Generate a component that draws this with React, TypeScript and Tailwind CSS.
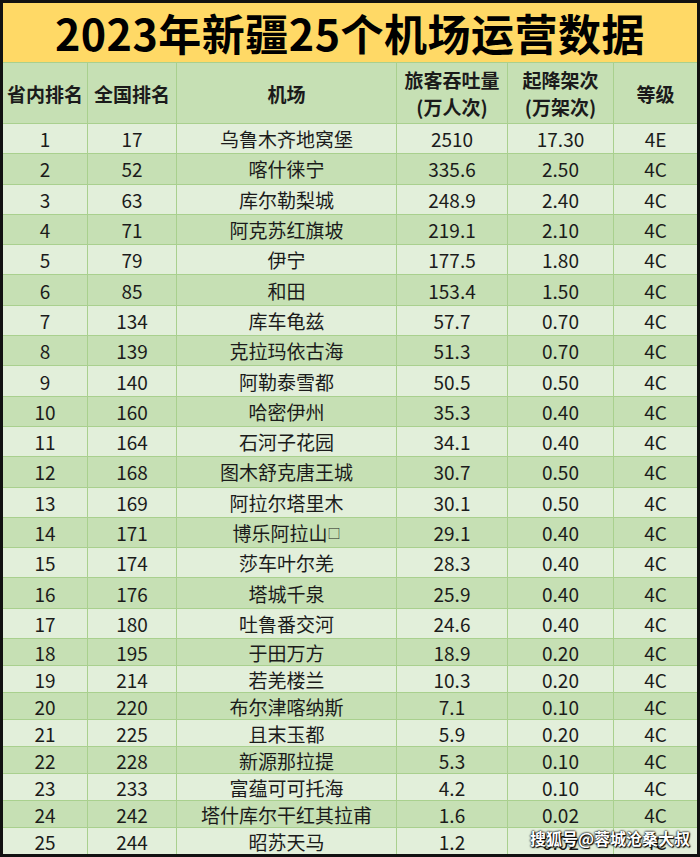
const rows: [string, string, string, string, string, string][] = [
  ['1', '17', '乌鲁木齐地窝堡', '2510', '17.30', '4E'],
  ['2', '52', '喀什徕宁', '335.6', '2.50', '4C'],
  ['3', '63', '库尔勒梨城', '248.9', '2.40', '4C'],
  ['4', '71', '阿克苏红旗坡', '219.1', '2.10', '4C'],
  ['5', '79', '伊宁', '177.5', '1.80', '4C'],
  ['6', '85', '和田', '153.4', '1.50', '4C'],
  ['7', '134', '库车龟兹', '57.7', '0.70', '4C'],
  ['8', '139', '克拉玛依古海', '51.3', '0.70', '4C'],
  ['9', '140', '阿勒泰雪都', '50.5', '0.50', '4C'],
  ['10', '160', '哈密伊州', '35.3', '0.40', '4C'],
  ['11', '164', '石河子花园', '34.1', '0.40', '4C'],
  ['12', '168', '图木舒克唐王城', '30.7', '0.50', '4C'],
  ['13', '169', '阿拉尔塔里木', '30.1', '0.50', '4C'],
  ['14', '171', '博乐阿拉山□', '29.1', '0.40', '4C'],
  ['15', '174', '莎车叶尔羌', '28.3', '0.40', '4C'],
  ['16', '176', '塔城千泉', '25.9', '0.40', '4C'],
  ['17', '180', '吐鲁番交河', '24.6', '0.40', '4C'],
  ['18', '195', '于田万方', '18.9', '0.20', '4C'],
  ['19', '214', '若羌楼兰', '10.3', '0.20', '4C'],
  ['20', '220', '布尔津喀纳斯', '7.1', '0.10', '4C'],
  ['21', '225', '且末玉都', '5.9', '0.20', '4C'],
  ['22', '228', '新源那拉提', '5.3', '0.10', '4C'],
  ['23', '233', '富蕴可可托海', '4.2', '0.10', '4C'],
  ['24', '242', '塔什库尔干红其拉甫', '1.6', '0.02', '4C'],
  ['25', '244', '昭苏天马', '1.2', '0.02', '4C'],
];

const cols = 'grid grid-cols-[84px_88px_219px_110px_105px_83px] gap-px';

function Name({ text }: { text: string }) {
  // the tofu box at the end of one name is drawn smaller than the glyphs
  if (text.endsWith('□')) {
    return (
      <>
        {text.slice(0, -1)}
        <span className="text-[13px]">□</span>
      </>
    );
  }
  return <>{text}</>;
}

export default function App() {
  return (
    <div
      className="relative w-[700px] h-[857px] bg-[#111] pt-[3px] pl-[3px] pr-[3px] pb-[2px] text-[#1b1b1b]"
      style={{ fontFamily: '"Noto Sans CJK SC", "Noto Sans", sans-serif' }}
    >
      <div className="flex flex-col gap-px bg-[#a9d08e]">
        <div className="flex h-[59px] items-center justify-center bg-[#ffd966] text-[43px] font-bold leading-none tracking-[0.5px] text-black">
          2023年新疆25个机场运营数据
        </div>

        <div className={`${cols} h-[60px] text-[19px] font-bold leading-[27px]`}>
          <div className="flex items-center justify-center bg-[#c6e0b4]">省内排名</div>
          <div className="flex items-center justify-center bg-[#c6e0b4]">全国排名</div>
          <div className="flex items-center justify-center bg-[#c6e0b4]">机场</div>
          <div className="flex flex-col items-center justify-center bg-[#c6e0b4]">
            <span>旅客吞吐量</span>
            <span>(万人次)</span>
          </div>
          <div className="flex flex-col items-center justify-center bg-[#c6e0b4]">
            <span>起降架次</span>
            <span>(万架次)</span>
          </div>
          <div className="flex items-center justify-center bg-[#c6e0b4]">等级</div>
        </div>

        {rows.map((r, i) => {
          const fill = i % 2 === 0 ? 'bg-[#e2efda]' : 'bg-[#c6e0b4]';
          const h = i < 17 ? 'h-[29.3px]' : 'h-[26px]';
          return (
            <div key={r[0]} className={`${cols} ${h} text-[19px] leading-none`}>
              {r.map((cell, j) => (
                <div key={j} className={`flex items-center justify-center ${fill}`}>
                  {j === 2 ? <Name text={cell} /> : cell}
                </div>
              ))}
            </div>
          );
        })}
      </div>

      <div className="absolute left-[530px] top-[826px] text-[16px] font-bold text-white [text-shadow:0_0_2px_#000,0_0_2px_#000,1px_1px_1px_#000]">
        搜狐号@蓉城沧桑大叔
      </div>
    </div>
  );
}
